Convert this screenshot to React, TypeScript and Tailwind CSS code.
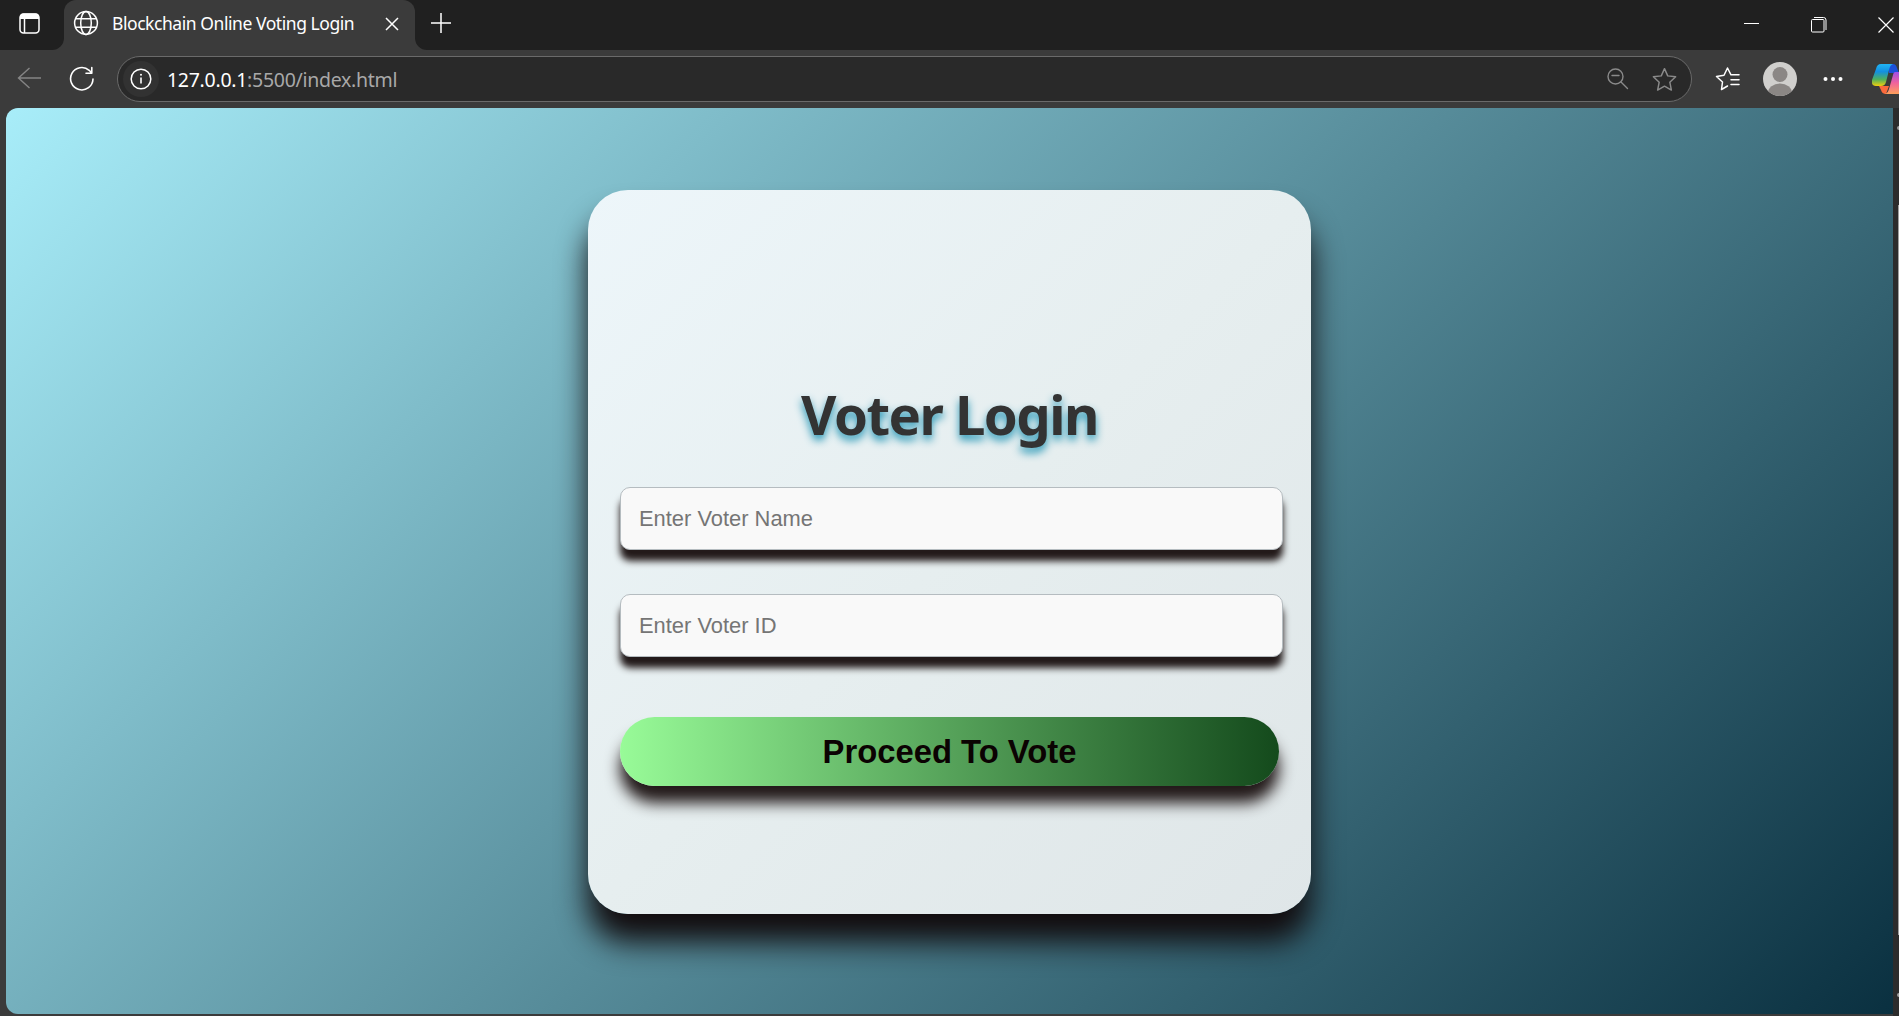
import type { ReactNode } from "react";

function Icon({ size, children, className = "" }: { size: number; children: ReactNode; className?: string }) {
  return (
    <svg width={size} height={size} viewBox="0 0 24 24" fill="none" stroke="currentColor" strokeLinecap="round" strokeLinejoin="round" className={`shrink-0 ${className}`}>
      {children}
    </svg>
  );
}

const STAR = "M12 1.6l3.1 6.9 7.6.9-5.6 5.2 1.5 7.5-6.6-3.7-6.6 3.7 1.5-7.5L1.3 9.4l7.6-.9z";

function TabStrip() {
  return (
    <div className="flex h-[50px] shrink-0 bg-[#202020] text-white">
      <div className="flex w-16 shrink-0">
        <svg width="22" height="22" viewBox="0 0 22 22" className="ml-[19px] mt-[13px] shrink-0" fill="none">
          <rect x="1" y="1" width="19" height="19" rx="3.5" stroke="#fff" strokeWidth="1.5" />
          <path d="M1 6V4a3.500 3.500 0 0 1 3.500-3.500h12A3.500 3.500 0 0 1 20 4v2z" fill="#fff" />
          <path d="M5.500 6v14" stroke="#fff" strokeWidth="1.5" />
        </svg>
      </div>
      <div className="relative flex w-[351px] shrink-0 rounded-t-[12px] bg-[#3b3b3b]">
        <svg width="12" height="12" className="absolute bottom-0 -left-3"><path d="M12 0v12H0A12 12 0 0 0 12 0z" fill="#3b3b3b" /></svg>
        <svg width="12" height="12" className="absolute bottom-0 -right-3"><path d="M0 0v12h12A12 12 0 0 1 0 0z" fill="#3b3b3b" /></svg>
        <svg width="26" height="26" viewBox="0 0 26 26" fill="none" stroke="#fff" strokeWidth="1.500" className="ml-[9px] mt-[10px] shrink-0">
          <circle cx="13" cy="13" r="11.400" />
          <ellipse cx="13" cy="13" rx="5.300" ry="11.400" />
          <path d="M2.500 8.800h21M2.500 17.200h21" />
        </svg>
        <span className="ml-[13px] mt-[9px] w-[243px] whitespace-nowrap font-['Noto_Sans'] text-[17.500px] leading-[28px] tracking-[-0.440px]">Blockchain Online Voting Login</span>
        <svg width="14" height="14" viewBox="0 0 14 14" className="ml-[30px] mt-[17px]" stroke="#fff" strokeWidth="1.500"><path d="M1 1l12 12M13 1L1 13" /></svg>
      </div>
      <svg width="22" height="22" viewBox="0 0 22 22" className="ml-[15px] mt-[12px]" stroke="#fff" strokeWidth="1.500"><path d="M1 11h20M11 1v20" /></svg>
      <div className="ml-auto flex">
        <svg width="16" height="16" className="mt-[16px]" stroke="#fff"><path d="M0 7.500h15" /></svg>
        <svg width="18" height="18" viewBox="0 0 18 18" fill="none" stroke="#fff" className="ml-[50px] mt-[16px]">
          <rect x="1.500" y="3.500" width="12.500" height="12.500" rx="1" />
          <path d="M4 1.500h9.500a2.500 2.500 0 0 1 2.500 2.500V14" strokeWidth="1" />
        </svg>
        <svg width="16" height="16" viewBox="0 0 16 16" className="ml-[50px] mr-[5px] mt-[17px]" stroke="#fff" strokeWidth="1.200"><path d="M.5.5l15 15M15.500.5l-15 15" /></svg>
      </div>
    </div>
  );
}

function Toolbar() {
  return (
    <div className="flex h-[58px] shrink-0 overflow-hidden text-white">
      <svg width="26" height="24" viewBox="0 0 26 24" fill="none" stroke="#858585" strokeWidth="1.400" className="ml-[17px] mt-[16px] shrink-0"><path d="M24 12H1.500M12.500 2L1.500 12l11 10" /></svg>
      <svg width="26" height="26" viewBox="0 0 26 26" fill="none" stroke="#fff" strokeWidth="1.600" strokeLinecap="round" className="ml-[26px] mt-[16px] shrink-0">
        <path d="M24 13A11.200 11.200 0 1 1 20.200 4.300L22.500 6.800M22.800 1.500V7.200H17" strokeLinejoin="round" />
      </svg>
      <div className="ml-[22px] mt-[6px] flex h-[46px] w-[1575px] shrink-0 items-center rounded-full border-[1.500px] border-[#6a6a6a] bg-[#292929]">
        <div className="ml-[5px] flex size-[36px] items-center justify-center rounded-full bg-[#323232]">
          <svg width="22" height="22" viewBox="0 0 22 22" fill="none" stroke="#fff" strokeWidth="1.500">
            <circle cx="11" cy="11" r="9.800" />
            <path d="M11 9.500V15.500" strokeWidth="1.600" />
            <circle cx="11" cy="6.800" r="1" fill="#fff" stroke="none" />
          </svg>
        </div>
        <span className="ml-[8px] mt-[2px] whitespace-nowrap font-['Noto_Sans'] text-[19.500px] tracking-[-0.280px] text-[#a8a8a8]"><span className="text-white">127.0.0.1</span>:5500/index.html</span>
        <svg width="22" height="22" viewBox="0 0 22 22" fill="none" stroke="#8a8a8a" strokeWidth="1.400" strokeLinecap="round" className="ml-auto mr-[23px]">
          <circle cx="8.500" cy="8.500" r="7.500" /><path d="M5 7.500h7M14 14l6.500 6.500" />
        </svg>
        <Icon size={25} className="mr-[14px] text-[#8a8a8a]"><path d={STAR} strokeWidth="1.400" /></Icon>
      </div>
      <svg width="26" height="26" viewBox="0 0 26 26" fill="none" stroke="#fff" strokeWidth="1.500" strokeLinecap="round" strokeLinejoin="round" className="ml-[23px] mt-[16px] shrink-0">
        <path d="M12.500 20L6.500 23.500l1-7.500L1.500 10.500l7.500-1.200 3.500-7.300L16 8.800h8M16 13.800h8M16 18.500h8" />
      </svg>
      <svg width="34" height="34" viewBox="0 0 34 34" className="ml-[22px] mt-[12px] shrink-0">
        <clipPath id="avatar"><circle cx="17" cy="17" r="17" /></clipPath>
        <g clipPath="url(#avatar)"><path d="M0 0h34v34H0z" fill="#d0cfcd" /><circle cx="17" cy="12.500" r="7.500" fill="#8b8785" /><ellipse cx="17" cy="31" rx="12" ry="9.500" fill="#8b8785" /></g>
      </svg>
      <svg width="20" height="6" className="ml-[26px] mt-[26px] shrink-0" fill="#fff"><circle cx="2.500" cy="3" r="2" /><circle cx="10" cy="3" r="2" /><circle cx="17.500" cy="3" r="2" /></svg>
      <svg width="27" height="31" viewBox="0 0 27 31" className="ml-[29px] mt-[14px] shrink-0">
        <defs>
          <linearGradient id="copilotCool" x1="0" y1="0" x2="0" y2="1"><stop offset="0" stopColor="#20b5f5" /><stop offset=".35" stopColor="#138fe0" /><stop offset=".7" stopColor="#4fb05c" /><stop offset="1" stopColor="#f2cf0c" /></linearGradient>
          <linearGradient id="copilotWarm" x1="0" y1="0" x2="0" y2="1"><stop offset="0" stopColor="#a04ee8" /><stop offset=".5" stopColor="#f0639c" /><stop offset="1" stopColor="#ffa05a" /></linearGradient>
        </defs>
        <path d="M17 0h4q3 0 4 4l2 5h-10z" fill="#1b50d8" />
        <path d="M7 22h10l-3 8q-4 0-5-4z" fill="#fb6a3c" />
        <path d="M9 0h12q-3 1-4 6l-3 12q-1 4-5 4H4q-5 0-4-6L4 5Q5 0 9 0z" fill="url(#copilotCool)" />
        <path d="M23 8h4v22H13q3-1 4-5l4-14q.500-3 2-3z" fill="url(#copilotWarm)" />
      </svg>
    </div>
  );
}

function VoterField({ placeholder }: { placeholder: string }) {
  return (
    <input
      placeholder={placeholder}
      className="block h-[63px] w-[663px] rounded-[10px] border border-[#b5bcc0] bg-[#f9f9f9] px-[18px] font-['Liberation_Sans'] text-[21.900px] shadow-[0_11px_7px_#231a1a] outline-none placeholder:text-[#757575] placeholder:opacity-100"
    />
  );
}

export default function App() {
  return (
    <div className="flex h-[1016px] w-[1899px] flex-col overflow-hidden bg-[#3b3b3b]">
      <TabStrip />
      <Toolbar />
      <div className="flex h-[908px]">
        <main className="ml-[6px] h-[906px] w-[1887px] shrink-0 overflow-hidden rounded-tl-[12px] rounded-bl-[12px] bg-[linear-gradient(135deg,#a8edf9,#0a3040)]">
          <section className="ml-[582px] mt-[82px] flex h-[724px] w-[723px] flex-col rounded-[40px] bg-[linear-gradient(135deg,#edf6fa,#e6eeef_50%,#dfe6e8)] pl-8 shadow-[0_28px_30px_#120c0e]">
            <h1 className="mt-[184px] w-[659px] text-center font-['Noto_Sans'] text-[54.500px] font-bold leading-[80px] tracking-[-1.550px] text-[#333] [text-shadow:0_5px_8px_#2596b5]">Voter Login</h1>
            <div className="mt-[33px] flex flex-col gap-11">
              <VoterField placeholder="Enter Voter Name" />
              <VoterField placeholder="Enter Voter ID" />
            </div>
            <button className="mt-[60px] h-[69px] w-[659px] rounded-[35px] bg-[linear-gradient(90deg,#98fb98,#144a1c)] font-['Liberation_Sans'] text-[32.800px] font-bold text-[#0b0202] shadow-[0_17px_15px_#231a1a]">Proceed To Vote</button>
          </section>
        </main>
        <div className="relative flex-1 bg-[#2c2c2c]">
          <div className="absolute right-0 top-[18px] h-[4px] w-[2px] rounded-l-full bg-[#9f9f9f]" />
          <div className="absolute right-0 top-[97px] h-[730px] w-px bg-[#9f9f9f]" />
          <div className="absolute right-0 top-[885px] h-[4px] w-[2px] rounded-l-full bg-[#9f9f9f]" />
        </div>
      </div>
    </div>
  );
}
